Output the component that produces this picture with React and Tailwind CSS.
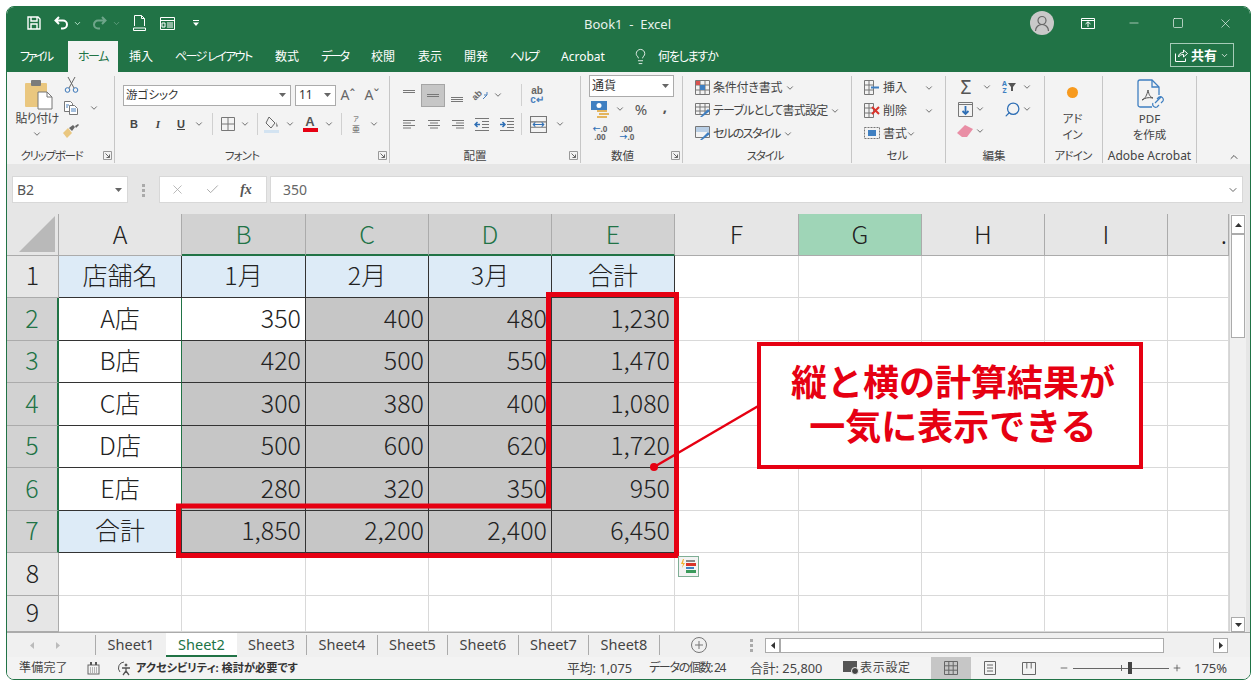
import React from "react";
import { ChevronDown, ChevronUp, X, Check, Minus, Square, Lightbulb, Plus, Search } from "lucide-react";

const Chev = ({ c = "#555", s = 10 }) => <ChevronDown size={s} color={c} strokeWidth={2} />;
const Caret = ({ c = "#666" }) => (
  <svg width="7" height="4" viewBox="0 0 7 4"><path d="M0 0h7L3.5 4z" fill={c} /></svg>
);
const Slot = ({ w, children }) => <div className={`flex items-center justify-center shrink-0 ${w}`}>{children}</div>;
const Dots = () => (
  <svg width="3" height="14" viewBox="0 0 3 14" fill="#aaa"><rect y="1" width="3" height="3" /><rect y="6" width="3" height="3" /><rect y="11" width="3" height="3" /></svg>
);

const Ic = ({ s = 16, vb = "0 0 16 16", stroke = "#666", children, sw = 1 }) => (
  <svg width={s} height={s} viewBox={vb} fill="none" stroke={stroke} strokeWidth={sw}>{children}</svg>
);
const Lines = ({ d, stroke = "#777" }) => <Ic stroke={stroke}><path d={d} /></Ic>;

const Launcher = () => (
  <svg className="absolute right-[2px] top-[2px]" width="9" height="9" viewBox="0 0 9 9" fill="none" stroke="#666">
    <path d="M.5 8.500V.5h8v8z" stroke="#999" /><path d="M2.500 2.500l4 4M6.500 3.500v3h-3" />
  </svg>
);

const Group = ({ w, label, launcher, children, labelClass = "" }) => (
  <div className={`flex flex-col shrink-0 h-[87px] border-r border-[#c6c6c6] ${w}`}>
    <div className="h-[73px]">{children}</div>
    <div className={`relative h-[14px] flex items-center justify-center text-[11.500px] leading-none text-[#444] whitespace-nowrap ${labelClass}`}>
      <span>{label}</span>
      {launcher && <Launcher />}
    </div>
  </div>
);

const T = ({ children, className = "" }) => <span className={`text-[12px] leading-none whitespace-nowrap text-[#444] ${className}`}>{children}</span>;

const tabs = [
  ["挿入", "w-[24px] ml-[11px]"],
  ["ページ レイアウト", "w-[78px] ml-[22px] tracking-[-1.600px]"],
  ["数式", "w-[24px] ml-[22px]"],
  ["データ", "w-[28px] ml-[22px] tracking-[-2.300px]"],
  ["校閲", "w-[24px] ml-[22px]"],
  ["表示", "w-[24px] ml-[23px]"],
  ["開発", "w-[24px] ml-[22px]"],
  ["ヘルプ", "w-[28px] ml-[22px] tracking-[-2.300px]"],
  ["Acrobat", "w-[45px] ml-[23px]"],
];

const TitleBar = () => (
  <div className="h-[32px] bg-[#217346] flex items-center text-white shrink-0">
    <Slot w="w-[16px] ml-[19px]">
      <Ic stroke="#fff" sw={1.400}><path d="M2 2h10l2 2v10H2zM5 2v4h6V2M5 14V9h6v5" /></Ic>
    </Slot>
    <Slot w="w-[18px] ml-[11px]">
      <svg width="16" height="14" viewBox="0 0 16 14" fill="none" stroke="#fff" strokeWidth="2"><path d="M5 1L1.500 4.500 5 8M2 4.500h7a4 4 0 014 4v0a4 4 0 01-4 4H7" /></svg>
    </Slot>
    <Slot w="w-[10px] ml-[1px]"><Chev c="#dfe" s={9} /></Slot>
    <Slot w="w-[18px] ml-[8px]">
      <svg width="16" height="14" viewBox="0 0 16 14" fill="none" stroke="#6ea58a" strokeWidth="2"><path d="M11 1l3.500 3.500L11 8M14 4.500H7a4 4 0 00-4 4v0a4 4 0 004 4h2" /></svg>
    </Slot>
    <Slot w="w-[10px] ml-[3px]"><Chev c="#6ea58a" s={9} /></Slot>
    <Slot w="w-[16px] ml-[10px]">
      <svg width="13" height="16" viewBox="0 0 13 16" fill="none" stroke="#fff"><path d="M1.500 11V.5h7l3 3V11M8.500.5v3h3M.5 13h12v2.500H.5z" /></svg>
    </Slot>
    <Slot w="w-[16px] ml-[12px]">
      <svg width="15" height="13" viewBox="0 0 15 13" fill="none" stroke="#fff"><path d="M.5.5h14v12H.5zM.5 3.500h14M2 6h3v4H2zM7 6h6M7 8h6M7 10h6" /></svg>
    </Slot>
    <Slot w="w-[10px] ml-[16px]">
      <svg width="6" height="6" viewBox="0 0 6 6" fill="#fff"><path d="M0 0h6v1H0zM0 2.500h6L3 6z" /></svg>
    </Slot>
    <div className="ml-[383px] mt-[2px] w-[88px] text-[13px] leading-none whitespace-nowrap text-[#e8f2ec]">Book1&nbsp; - &nbsp;Excel</div>
    <div className="ml-[358px] w-[24px] h-[24px] rounded-full bg-[#c9c9c9] flex items-center justify-center">
      <svg width="18" height="18" viewBox="0 0 18 18" fill="none" stroke="#666" strokeWidth="1.200"><circle cx="9" cy="6.500" r="4" /><path d="M2.500 17c0-4 3-6.500 6.500-6.500s6.500 2.500 6.500 6.500" /></svg>
    </div>
    <Slot w="w-[16px] ml-[26px]">
      <svg width="14" height="11" viewBox="0 0 14 11" fill="none" stroke="#fff"><path d="M.5.5h13v10H.5zM.5 2.500h13M7 9V4M4.500 6L7 3.800 9.500 6" /></svg>
    </Slot>
    <Slot w="w-[16px] ml-[30px]"><Minus size={14} color="#fff" strokeWidth={1} /></Slot>
    <Slot w="w-[16px] ml-[28px]"><Square size={12} color="#fff" strokeWidth={1.300} /></Slot>
    <Slot w="w-[16px] ml-[31px]"><X size={15} color="#fff" strokeWidth={1} /></Slot>
  </div>
);

const TabBar = () => (
  <div className="h-[33px] bg-[#217346] flex items-end shrink-0 relative">
    <div className="flex items-end h-full">
      <div className="flex items-center h-[31px] w-[32px] ml-[13px] text-[12px] text-white whitespace-nowrap tracking-[-2.500px]">ファイル</div>
      <div className="flex items-center justify-center h-[31px] w-[50px] ml-[16px] bg-[#f3f3f3] text-[12px] text-[#217346] whitespace-nowrap tracking-[-1.500px]">ホーム</div>
      {tabs.map(([t, c]) => (
        <div key={t} className={`flex items-center h-[31px] text-[12px] text-white whitespace-nowrap ${c}`}>{t}</div>
      ))}
      <div className="flex items-center h-[31px] ml-[26px]"><Lightbulb size={17} color="#fff" strokeWidth={1.200} /></div>
      <div className="flex items-center h-[31px] w-[58px] ml-[9px] text-[12px] text-white whitespace-nowrap tracking-[-1.200px]">何をしますか</div>
    </div>
    <div className="ml-[454px] mb-[5px] w-[64px] h-[24px] border border-[#a6ccb8] flex items-center justify-center gap-[3px] text-white">
      <svg width="13" height="13" viewBox="0 0 13 13" fill="none" stroke="#fff"><path d="M.5 4.500v8h10v-3M3.500 8c0-3 2-4.500 5-4.500V1l4 3.500-4 3.500V5.500C6 5.500 4.500 6.500 3.500 8z" /></svg>
      <span className="text-[13px] font-bold leading-none">共有</span>
      <Chev c="#fff" s={9} />
    </div>
  </div>
);

const Ribbon = () => (
  <div className="h-[92px] bg-[#f3f3f3] pt-[4px] flex shrink-0">
    <Group w="w-[108px]" label={<span className="tracking-[-1.300px]">クリップボード</span>} launcher labelClass="pr-[18px]">
      <div className="flex">
        <div className="ml-[6px] w-[48px] flex flex-col items-center">
          <svg className="mt-[4px] ml-[4px]" width="28" height="30" viewBox="0 0 28 30">
            <rect x="0" y="3" width="22" height="24" rx="1" fill="#eac77f" />
            <rect x="6" y="0" width="10" height="6" rx="1" fill="#7b7b7b" />
            <path d="M13 12h9l5 5v12H13z" fill="#fff" stroke="#777" />
            <path d="M22 12v5h5" fill="none" stroke="#777" />
          </svg>
          <T className="mt-[3px] text-[11.500px] tracking-[-0.700px]">貼り付け</T>
          <div className="mt-[4px]"><Chev /></div>
        </div>
        <div className="w-[20px] flex flex-col items-center">
          <div className="h-[18px] flex items-center">
            <svg width="15" height="16" viewBox="0 0 15 16" fill="none" stroke="#666"><circle cx="3.500" cy="13" r="2.300" stroke="#3a76b8" /><circle cx="11.500" cy="13" r="2.300" stroke="#3a76b8" /><path d="M5 11L11 0M10 11L4 0" /></svg>
          </div>
          <div className="h-[27px] flex items-center">
            <svg width="16" height="16" viewBox="0 0 16 16" fill="#fff" stroke="#777"><path d="M1.500 1.500h6l2 2v8h-8z" /><path d="M6.500 5.500h5l3 3v6h-8z" /><path d="M8 9h5M8 11h5M3 5h3M3 7h2" stroke="#4a80bd" /></svg>
          </div>
          <div className="h-[20px] flex items-center">
            <svg width="16" height="14" viewBox="0 0 16 14"><path d="M0 9l5-5 4 5-5 5z" fill="#eac77f" /><path d="M6 4l4-3 2 2-3 4z" fill="#666" /><path d="M12 2l3-2 1 1-3 3z" fill="#666" /></svg>
          </div>
        </div>
        <div className="w-[26px] flex items-start justify-center pt-[27px]"><Chev /></div>
      </div>
    </Group>

    <Group w="w-[275px]" label={<span className="tracking-[-0.800px]">フォント</span>} launcher labelClass="pr-[20px]">
      <div className="flex flex-col pt-[8px] gap-[7px] pl-[8px]">
        <div className="flex items-center h-[22px]">
          <div className="w-[168px] h-[21px] bg-white border border-[#ababab] flex items-center justify-between pl-[2px] pr-[4px]">
            <span className="text-[11.500px] leading-none text-[#333]">游ゴシック</span><Caret />
          </div>
          <div className="ml-[4px] w-[41px] h-[21px] bg-white border border-[#ababab] flex items-center justify-between pl-[3px] pr-[4px]">
            <span className="text-[12px] leading-none text-[#333]">11</span><Caret />
          </div>
          <Slot w="w-[24px] ml-[0px]"><span className="text-[14px] text-[#666] leading-none">Aˆ</span></Slot>
          <Slot w="w-[24px]"><span className="text-[14px] text-[#666] leading-none">Aˇ</span></Slot>
        </div>
        <div className="flex items-center h-[22px]">
          <Slot w="w-[22px]"><span className="text-[11px] font-bold text-[#444] leading-none font-['Liberation_Sans',sans-serif]">B</span></Slot>
          <Slot w="w-[26px]"><span className="text-[11px] font-bold italic text-[#444] leading-none font-['Liberation_Serif',serif]">I</span></Slot>
          <Slot w="w-[20px]"><span className="text-[11px] font-bold underline text-[#444] leading-none font-['Liberation_Sans',sans-serif]">U</span></Slot>
          <Slot w="w-[16px]"><Chev /></Slot>
          <Slot w="w-[10px]"><div className="w-px h-[22px] bg-[#d0d0d0]" /></Slot>
          <Slot w="w-[22px]"><svg width="14" height="14" viewBox="0 0 14 14" fill="none" stroke="#777"><path d="M.5.5h13v13H.5zM7 .5v13M.5 7h13" /></svg></Slot>
          <Slot w="w-[12px]"><Chev /></Slot>
          <Slot w="w-[12px]"><div className="w-px h-[22px] bg-[#d0d0d0]" /></Slot>
          <Slot w="w-[18px]"><svg width="16" height="17" viewBox="0 0 16 17" fill="none"><path d="M5 1l6 6-4 5-5-5z" stroke="#666" /><path d="M12 6c1 2 2 3 2 4s-2 1-2 0 0-3 0-4z" fill="#999" /><rect x="0" y="14" width="15" height="3" fill="#d3e3f1" /></svg></Slot>
          <Slot w="w-[18px]"><Chev /></Slot>
          <Slot w="w-[22px]">
            <div className="flex flex-col items-center">
              <span className="text-[13px] font-bold text-[#555] leading-[12px] font-['Liberation_Sans',sans-serif]">A</span>
              <div className="w-[15px] h-[4px] bg-[#e60012]" />
            </div>
          </Slot>
          <Slot w="w-[16px]"><Chev /></Slot>
          <Slot w="w-[8px]"><div className="w-px h-[22px] bg-[#d0d0d0]" /></Slot>
          <Slot w="w-[22px]">
            <div className="flex flex-col items-center gap-[1px]">
              <span className="text-[6px] h-[7px] leading-[7px] text-[#555] block overflow-hidden">ア</span>
              <span className="text-[8px] h-[9px] leading-[9px] text-[#555] block overflow-hidden">亜</span>
            </div>
          </Slot>
          <Slot w="w-[14px]"><Chev /></Slot>
        </div>
      </div>
    </Group>

    <Group w="w-[191px]" label="配置" launcher labelClass="pr-[20px]">
      <div className="flex flex-col pt-[8px] gap-[7px] pl-[7px]">
        <div className="flex items-center h-[22px]">
          <Slot w="w-[24px]"><Lines d="M2 3.500h12M2 5.500h12" /></Slot>
          <Slot w="w-[24px] h-[23px] bg-[#c6c6c6] border border-[#a5a5a5]"><Lines d="M2 7.500h12M2 9.500h12" /></Slot>
          <Slot w="w-[24px]"><Lines d="M2 10.500h12M2 12.500h12M2 14.500h12" /></Slot>
          <Slot w="w-[22px]">
            <div className="flex items-center">
              <span className="text-[9px] font-bold leading-none text-[#666] -rotate-45 font-['Liberation_Sans',sans-serif]">ab</span>
              <svg className="-ml-[1px]" width="6" height="10" viewBox="0 0 6 10" fill="none" stroke="#4a80bd"><path d="M1 9l4-4M5 5V2M5 5H2" /></svg>
            </div>
          </Slot>
          <Slot w="w-[14px]"><Chev /></Slot>
          <Slot w="w-[16px] ml-[8px]"><div className="w-px h-[22px] bg-[#d0d0d0]" /></Slot>
          <Slot w="w-[16px]">
            <div className="flex flex-col items-center">
              <span className="text-[10px] font-bold h-[9px] leading-[9px] text-[#666] block font-['Liberation_Sans',sans-serif]">ab</span>
              <span className="text-[10px] font-bold h-[9px] leading-[9px] text-[#4a80bd] block font-['Liberation_Sans',sans-serif]">c↵</span>
            </div>
          </Slot>
        </div>
        <div className="flex items-center h-[22px]">
          <Slot w="w-[24px]"><Lines d="M2 4.500h12M2 7h8M2 9.500h12M2 12h8" /></Slot>
          <Slot w="w-[25px]"><Lines d="M2 4.500h12M4 7h8M2 9.500h12M4 12h8" /></Slot>
          <Slot w="w-[24px]"><Lines d="M2 4.500h12M6 7h8M2 9.500h12M6 12h8" /></Slot>
          <Slot w="w-[24px]"><svg width="16" height="16" viewBox="0 0 16 16" fill="none"><path d="M1 2.500h14M1 14.500h14M8 5.500h7M8 8.500h7M8 11.500h7" stroke="#777" /><path d="M1 8.500h5M3.500 6L1 8.500 3.500 11" stroke="#2f6fb5" strokeWidth="1.500" /></svg></Slot>
          <Slot w="w-[25px]"><svg width="16" height="16" viewBox="0 0 16 16" fill="none"><path d="M1 2.500h14M1 14.500h14M8 5.500h7M8 8.500h7M8 11.500h7" stroke="#777" /><path d="M1 8.500h5M3.500 6L6 8.500 3.500 11" stroke="#2f6fb5" strokeWidth="1.500" /></svg></Slot>
          <Slot w="w-[4px]"><div className="w-px h-[22px] bg-[#d0d0d0]" /></Slot>
          <Slot w="w-[30px]"><svg width="17" height="17" viewBox="0 0 16 16" fill="none" stroke="#777"><path d="M.5.5h15v15H.5zM.5 5.500h15M.5 10.500h15" /><path d="M3 8h10M5 6l-2 2 2 2M11 6l2 2-2 2" stroke="#2f6fb5" /></svg></Slot>
          <Slot w="w-[14px]"><Chev /></Slot>
        </div>
      </div>
    </Group>

    <Group w="w-[102px]" label="数値" launcher labelClass="pr-[18px]">
      <div className="pl-[8px]">
        <div className="w-[85px] h-[22px] bg-white border border-[#ababab] flex items-center justify-between pl-[2px] pr-[4px] -mt-[1px]">
          <span className="text-[12px] leading-none text-[#333]">通貨</span><Caret />
        </div>
        <div className="flex items-center h-[24px]">
          <Slot w="w-[22px]"><svg width="18" height="17" viewBox="0 0 18 17"><rect x="0" y="0" width="16" height="9" fill="#3f7fc1" /><circle cx="8" cy="4.500" r="2.500" fill="#fff" /><rect x="6" y="9" width="10" height="2" fill="#e4b55e" /><rect x="8" y="12" width="10" height="2" fill="#e4b55e" /><rect x="6" y="15" width="10" height="2" fill="#e4b55e" /></svg></Slot>
          <Slot w="w-[17px]"><Chev /></Slot>
          <Slot w="w-[26px]"><span className="text-[15px] leading-none text-[#555]">%</span></Slot>
          <Slot w="w-[22px]"><span className="text-[15px] font-bold leading-none text-[#555] -mt-[5px]">,</span></Slot>
        </div>
        <div className="flex items-center h-[24px]">
          <Slot w="w-[22px]">
            <div className="flex flex-col items-center">
              <span className="text-[8px] font-bold h-[8px] leading-[8px] text-[#666] block"><span className="text-[#2f6fb5]">←</span>.0</span>
              <span className="text-[8px] font-bold h-[8px] leading-[8px] text-[#666] block">.00</span>
            </div>
          </Slot>
          <Slot w="w-[32px]">
            <div className="flex flex-col items-center">
              <span className="text-[8px] font-bold h-[8px] leading-[8px] text-[#666] block">.00</span>
              <span className="text-[8px] font-bold h-[8px] leading-[8px] text-[#666] block"><span className="text-[#2f6fb5]">→</span>.0</span>
            </div>
          </Slot>
        </div>
      </div>
    </Group>

    <Group w="w-[169px]" label={<span className="tracking-[-1.200px]">スタイル</span>} labelClass="pr-[4px]">
      <div className="pl-[11px] flex flex-col">
        {[
          ["条件付き書式", "tracking-[-0.200px]", <svg key="a" width="15" height="15" viewBox="0 0 15 15" fill="none" stroke="#777"><path d="M.5.5h14v14H.5zM.5 5h14M.5 10h14M5 .5v14M10 .5v14" /><rect x="1" y="1" width="4" height="4" fill="#d9534f" stroke="none" /><rect x="5" y="5" width="5" height="5" fill="#3f7fc1" stroke="none" /></svg>],
          ["テーブルとして書式設定", "tracking-[-0.800px]", <svg key="b" width="16" height="15" viewBox="0 0 16 15" fill="none" stroke="#777"><path d="M.5.500h14v11H.5zM.5 4h14M.5 8h14M5 .5v11M10 .5v11" /><path d="M5 14l8-8 2 2-8 6z" fill="#3f7fc1" stroke="none" /></svg>],
          ["セルのスタイル", "tracking-[-1.500px]", <svg key="c" width="16" height="15" viewBox="0 0 16 15" fill="none" stroke="#777"><path d="M.5.500h14v11H.5z" /><rect x="1" y="1" width="13" height="5" fill="#b9cfe6" stroke="none" /><path d="M5 14l8-8 2 2-8 6z" fill="#3f7fc1" stroke="none" /></svg>],
        ].map(([t, tr, i]) => (
          <div key={t} className="flex items-center h-[23px]">
            <Slot w="w-[17px]">{i}</Slot>
            <span className={`ml-[2px] text-[12px] leading-none whitespace-nowrap text-[#444] ${tr}`}>{t}</span>
            <span className="ml-[3px]"><Chev /></span>
          </div>
        ))}
      </div>
    </Group>

    <Group w="w-[94px]" label="セル" labelClass="pr-[2px]">
      <div className="pl-[11px] flex flex-col">
        {[
          ["挿入", "w-[18px]", <svg key="a" width="16" height="15" viewBox="0 0 16 15" fill="none" stroke="#777"><path d="M.5.500h9v14h-9zM.5 5h9M.5 10h9M5 .5v14" /><path d="M7 7.500h8" stroke="#3f7fc1" strokeWidth="2" /></svg>],
          ["削除", "w-[18px]", <svg key="b" width="16" height="15" viewBox="0 0 16 15" fill="none" stroke="#777"><path d="M.5.500h9v14h-9zM.5 5h9M.5 10h9M5 .5v14" /><path d="M8 4l7 7M15 4l-7 7" stroke="#d9342b" strokeWidth="2" /></svg>],
          ["書式", "w-[0px]", <svg key="c" width="16" height="15" viewBox="0 0 16 15" fill="none" stroke="#777"><path d="M.5 1.500h15v11H.5z" strokeDasharray="2 1" /><rect x="4" y="4" width="8" height="6" fill="#3f7fc1" stroke="none" /></svg>],
        ].map(([t, g, i]) => (
          <div key={t} className="flex items-center h-[23px]">
            <Slot w="w-[17px]">{i}</Slot>
            <span className="ml-[3px] text-[12px] leading-none whitespace-nowrap text-[#444]">{t}</span>
            <span className={g} />
            <span className="-ml-[1px]"><Chev /></span>
          </div>
        ))}
      </div>
    </Group>

    <Group w="w-[99px]" label="編集" labelClass="pr-[2px]">
      <div className="flex flex-col pl-[9px]">
        <div className="flex items-center h-[22px]">
          <Slot w="w-[22px]"><span className="text-[19px] leading-none text-[#555]">Σ</span></Slot>
          <Slot w="w-[20px]"><Chev /></Slot>
          <Slot w="w-[24px]">
            <div className="flex flex-col items-center mr-[1px]">
              <span className="text-[7px] font-bold h-[7px] leading-[7px] text-[#3f7fc1] block">A</span>
              <span className="text-[7px] font-bold h-[7px] leading-[7px] text-[#3f7fc1] block">Z</span>
            </div>
            <svg width="8" height="8" viewBox="0 0 8 8" fill="#555"><path d="M0 0h8L5 4v4H3V4z" /></svg>
          </Slot>
          <Slot w="w-[12px]"><Chev /></Slot>
        </div>
        <div className="flex items-center h-[22px]">
          <Slot w="w-[20px]"><svg width="15" height="15" viewBox="0 0 15 15" fill="none" stroke="#777"><path d="M.5.5h14v14H.5zM.5 2.500h14" /><path d="M7.500 4v8M4.500 9l3 3 3-3" stroke="#2f6fb5" strokeWidth="1.800" /></svg></Slot>
          <Slot w="w-[10px]"><Chev /></Slot>
          <Slot w="w-[18px] ml-[18px]"><Search size={17} color="#2f6fb5" strokeWidth={1.800} className="-scale-x-100" /></Slot>
          <Slot w="w-[12px]"><Chev /></Slot>
        </div>
        <div className="flex items-center h-[22px]">
          <Slot w="w-[20px]"><svg width="16" height="13" viewBox="0 0 16 13"><path d="M0 8l8-8 8 4-6 8H5z" fill="#e98ea5" /></svg></Slot>
          <Slot w="w-[10px]"><Chev /></Slot>
        </div>
      </div>
    </Group>

    <Group w="w-[58px]" label={<span className="tracking-[-0.800px]">アドイン</span>} labelClass="pr-[1px]">
      <div className="flex flex-col items-center pr-[2px]">
        <div className="mt-[11px] w-[11px] h-[11px] rounded-full bg-[#f79a1e]" />
        <div className="mt-[13px] text-[11.500px] leading-[16px] text-center text-[#444]">アド<br />イン</div>
      </div>
    </Group>

    <Group w="w-[94px]" label="Adobe Acrobat" labelClass="text-[12px]">
      <div className="flex flex-col items-center">
        <svg className="mt-[3px]" width="28" height="32" viewBox="0 0 28 32" fill="none" stroke="#3f7fc1" strokeWidth="1.300">
          <path d="M16 28H4a2 2 0 01-2-2V3a2 2 0 012-2h12l7 7v8" /><path d="M16 1v7h7" />
          <path d="M6 21c3-1 5-5 6-10 1 5 2 7 5 8-5-1-8 0-11 2z" stroke="#555" strokeWidth="1" />
          <path d="M19 24l6-6M17 24a3 3 0 004 4l2-2M21 20l2-2a3 3 0 014 4l-2 2" strokeWidth="1.200" />
        </svg>
        <div className="text-[11.500px] leading-[16px] text-center text-[#444]">PDF<br />を作成</div>
      </div>
    </Group>

    <div className="flex-1 flex items-end justify-end pr-[10px] pb-[1px]"><ChevronUp size={12} color="#555" /></div>
  </div>
);

const FormulaBar = () => (
  <div className="h-[50px] bg-[#e6e6e6] shrink-0 pl-[5px] pr-[7px] pt-[12px]">
    <div className="flex h-[27px] items-stretch">
      <div className="w-[116px] bg-white border border-[#d8d8d8] flex items-center justify-between pl-[4px] pr-[5px]">
        <span className="text-[14px] leading-none text-[#555]">B2</span><Caret />
      </div>
      <Slot w="w-[31px]"><Dots /></Slot>
      <div className="w-[108px] bg-white border border-[#d8d8d8] flex items-center">
        <Slot w="w-[34px]"><X size={15} color="#aaa" strokeWidth={1.300} /></Slot>
        <Slot w="w-[36px]"><Check size={15} color="#aaa" strokeWidth={1.600} /></Slot>
        <Slot w="w-[32px]"><span className="text-[14px] font-bold italic text-[#555] leading-none font-['Liberation_Serif',serif]">fx</span></Slot>
      </div>
      <div className="ml-[3px] flex-1 bg-white border border-[#d8d8d8] flex items-center justify-between pl-[12px] pr-[3px]">
        <span className="text-[14px] leading-none text-[#666]">350</span><Chev c="#666" s={12} />
      </div>
    </div>
  </div>
);

const cols = ["A", "B", "C", "D", "E", "F", "G", "H", "I", "."];
const data = [
  ["店舗名", "1月", "2月", "3月", "合計"],
  ["A店", "350", "400", "480", "1,230"],
  ["B店", "420", "500", "550", "1,470"],
  ["C店", "300", "380", "400", "1,080"],
  ["D店", "500", "600", "620", "1,720"],
  ["E店", "280", "320", "350", "950"],
  ["合計", "1,850", "2,200", "2,400", "6,450"],
  [],
  [],
];

const colHeadClass = (i) => {
  if (i >= 1 && i <= 4) return "justify-center bg-[#d2d2d2] text-[#217346] border-b-2 border-b-[#217346]";
  if (i === 6) return "justify-center bg-[#9fd5b7] text-[#222] border-b border-b-[#ababab]";
  if (i === 9) return "justify-end pr-[1px] bg-[#e6e6e6] text-[#222] border-b border-b-[#ababab]";
  return "justify-center bg-[#e6e6e6] text-[#222] border-b border-b-[#ababab]";
};

const cellClass = (r, c) => {
  if (c > 4 || r > 6) return "border-r border-b border-[#d9d9d9] bg-white";
  let b = "border-r border-b border-r-[#333] border-b-[#333] text-[#222] ";
  if (r === 0) return b + "bg-[#ddebf7] justify-center";
  if (c === 0) return (r === 6 ? "border-r border-b border-r-[#333] border-b-[#333] text-[#222] bg-[#ddebf7]" : "border-r border-b border-r-[#217346] border-b-[#333] text-[#222] bg-white") + " justify-center";
  if (r === 1 && c === 1) return b + "bg-white justify-end pr-[4px]";
  return b + "bg-[#c6c6c6] justify-end pr-[4px]";
};

const Sheet = () => (
  <div className="relative flex h-[418px] shrink-0 bg-white">
    <div className="w-[1222px] shrink-0 grid grid-cols-[52px_123px_124px_123px_123px_123px_124px_123px_123px_123px_61px] grid-rows-[42px_42px_43px_42px_43px_42px_43px_42px_43px_36px] font-['Noto_Sans_CJK_JP','Liberation_Sans',sans-serif] [font-feature-settings:normal] text-[25px] leading-none">
      <div className="bg-[#e6e6e6] border-r border-b border-[#ababab] flex items-end justify-end pr-[3px] pb-[3px]">
        <svg width="36" height="36" viewBox="0 0 36 36"><path d="M36 0v36H0z" fill="#b9b9b9" /></svg>
      </div>
      {cols.map((c, i) => (
        <div key={i} className={`flex items-center pb-[2px] border-r border-r-[#ababab] font-light ${colHeadClass(i)}`}>{c}</div>
      ))}
      {data.map((row, r) => (
        <React.Fragment key={r}>
          <div className={`flex items-center justify-center pb-[4px] font-light ${r >= 1 && r <= 6 ? "bg-[#d2d2d2] text-[#217346] border-r-2 border-r-[#217346] border-b border-b-[#ababab]" : "bg-[#e6e6e6] text-[#222] border-r border-r-[#ababab] border-b border-b-[#ababab]"}`}>{r + 1}</div>
          {cols.map((_, c) => (
            <div key={c} className={`flex items-center pb-[4px] font-light ${cellClass(r, c)}`}>{row[c] || ""}</div>
          ))}
        </React.Fragment>
      ))}
    </div>

    <div className="w-[17px] shrink-0 bg-[#f0f0f0] border-l border-[#d4d4d4] flex flex-col">
      <div className="h-[19px] mt-[1px] mx-[1px] bg-white border border-[#ababab] flex items-center justify-center"><svg width="7" height="4" viewBox="0 0 7 4"><path d="M0 4h7L3.500 0z" fill="#333" /></svg></div>
      <div className="h-[104px] mx-[1px] bg-white border border-[#ababab]" />
      <div className="flex-1" />
      <div className="h-[15px] mx-[1px] bg-white border border-[#ababab] flex items-center justify-center"><Caret c="#333" /></div>
    </div>
    <div className="flex-1 bg-[#e6e6e6]" />

    <svg className="absolute inset-0 pointer-events-none" width="1243" height="418" viewBox="7 214 1243 418" fill="none">
      <path d="M548.500 294.500H676.500V555.500H178.500V506H548.500Z" stroke="#e60012" strokeWidth="5" />
      <path d="M760 405L654 467" stroke="#e60012" strokeWidth="2.500" />
      <circle cx="654" cy="467" r="4" fill="#e60012" />
    </svg>

    <div className="absolute left-[750px] top-[128px] w-[386px] h-[127px] bg-white border-[4px] border-[#e60012] flex items-center justify-center pb-[7px] pl-[6px] text-center font-bold text-[36px] leading-[44px] text-[#e60012] font-['Noto_Sans_CJK_JP',sans-serif] [font-feature-settings:normal]">
      <div>縦と横の計算結果が<br />一気に表示できる</div>
    </div>

    <div className="absolute left-[671px] top-[342px] w-[21px] h-[21px] bg-[#f3f3f3] border border-[#7fae95] flex items-center justify-center">
      <svg width="16" height="15" viewBox="0 0 16 15"><path d="M2 0L0 5h2L1 9l3-5H2l1-4z" fill="#f2b233" /><rect x="5" y="1" width="9" height="2" fill="#888" /><rect x="5" y="4" width="10" height="3" fill="#d9342b" /><rect x="5" y="8" width="8" height="2" fill="#3f7fc1" /><rect x="5" y="11" width="10" height="3" fill="#3a9a5b" /></svg>
    </div>
  </div>
);

const sheetTabs = ["Sheet1", "Sheet2", "Sheet3", "Sheet4", "Sheet5", "Sheet6", "Sheet7", "Sheet8"];

const TabsBar = () => (
  <div className="h-[25px] bg-[#f0f0f0] border-t border-[#ababab] flex items-stretch shrink-0">
    <div className="w-[89px] flex items-center border-r border-[#ababab] my-[2px]">
      <Slot w="w-[12px] ml-[19px]"><svg width="4" height="7" viewBox="0 0 4 7"><path d="M4 0v7L0 3.500z" fill="#bbb" /></svg></Slot>
      <Slot w="w-[12px] ml-[14px]"><svg width="4" height="7" viewBox="0 0 4 7"><path d="M0 0v7l4-3.500z" fill="#bbb" /></svg></Slot>
    </div>
    {sheetTabs.map((s, i) =>
      i === 1 ? (
        <div key={s} className="w-[71px] bg-white border-b-2 border-[#217346] flex items-center justify-center text-[14.500px] leading-none text-[#217346]">{s}</div>
      ) : (
        <div key={s} className={`flex items-center justify-center my-[2px] pb-[2px] text-[14.500px] leading-none text-[#444] ${i % 2 === 0 ? "w-[70px]" : "w-[71px]"} ${i === 0 ? "" : "border-r border-[#ababab]"}`}>{s}</div>
      )
    )}
    <div className="w-[78px] flex items-center justify-center">
      <svg width="16" height="16" viewBox="0 0 16 16" fill="none" stroke="#777"><circle cx="8" cy="8" r="7.500" /><path d="M8 4v8M4 8h8" /></svg>
    </div>
    <Slot w="w-[26px]"><Dots /></Slot>
    <div className="flex items-center">
      <div className="ml-[1px] w-[15px] h-[15px] bg-white border border-[#ababab] flex items-center justify-center"><svg width="4" height="7" viewBox="0 0 4 7"><path d="M4 0v7L0 3.500z" fill="#333" /></svg></div>
      <div className="w-[384px] h-[15px] bg-white border border-[#ababab]" />
      <div className="ml-[49px] w-[15px] h-[15px] bg-white border border-[#ababab] flex items-center justify-center"><svg width="4" height="7" viewBox="0 0 4 7"><path d="M0 0v7l4-3.500z" fill="#333" /></svg></div>
    </div>
  </div>
);

const StatusBar = () => (
  <div className="flex-1 bg-[#f3f3f3] flex items-center text-[12px] leading-none text-[#444] whitespace-nowrap">
    <span className="ml-[12px] w-[48px] tracking-[0.200px]">準備完了</span>
    <Slot w="w-[16px] ml-[18px]"><svg width="13" height="13" viewBox="0 0 13 13"><rect x="1" y="3" width="11" height="9" fill="none" stroke="#666" /><path d="M3 0h2v3H3zM8 0h2v3H8z" fill="#555" /><path d="M3 6h7M3 8h7M3 10h7" stroke="#777" strokeDasharray="1 1" /></svg></Slot>
    <Slot w="w-[18px] ml-[14px]"><svg width="16" height="16" viewBox="0 0 16 16" fill="none" stroke="#555"><path d="M8 2a6 6 0 00-4 10" /><circle cx="10" cy="5" r="1" fill="#555" /><path d="M6 8h8M10 8v3l-3 4M10 11l3 4" strokeWidth="1.300" /></svg></Slot>
    <span className="ml-[3px] w-[163px] font-bold text-[11.200px] text-[#333]">アクセシビリティ: 検討が必要です</span>
    <span className="ml-[268px] w-[66px] text-[12.800px]">平均: 1,075</span>
    <span className="ml-[16px] w-[75px] tracking-[-1.300px]">データの個数: 24</span>
    <span className="ml-[26px] w-[74px] text-[12.800px]">合計: 25,800</span>
    <Slot w="w-[16px] ml-[19px]"><svg width="16" height="14" viewBox="0 0 16 14"><rect x="0" y="0" width="14" height="11" fill="#555" /><circle cx="12" cy="10" r="3.500" fill="#444" stroke="#f3f3f3" /></svg></Slot>
    <span className="ml-[1px] w-[51px] tracking-[0.700px]">表示設定</span>
    <div className="ml-[20px] w-[40px] h-full bg-[#c6c6c6] flex items-center justify-center">
      <svg width="14" height="14" viewBox="0 0 14 14" fill="none" stroke="#666"><path d="M.5.5h13v13H.5zM4.800.5v13M9.200.5v13M.5 4.800h13M.5 9.200h13" /></svg>
    </div>
    <Slot w="w-[38px]"><svg width="12" height="14" viewBox="0 0 12 14" fill="none" stroke="#666"><path d="M.5.5h11v13H.5zM3 4h6M3 7h6M3 10h6" /></svg></Slot>
    <Slot w="w-[40px]"><svg width="14" height="13" viewBox="0 0 14 13" fill="none" stroke="#666"><path d="M.5.5h13v12H.5zM4.800.5v6M9.200.5v6" /></svg></Slot>
    <Slot w="w-[10px] ml-[10px]"><Minus size={10} color="#555" /></Slot>
    <div className="ml-[4px] w-[96px] h-[12px] flex items-center">
      <div className="w-[48px] h-px bg-[#666]" />
      <div className="w-px h-[6px] bg-[#666]" />
      <div className="w-[6px] h-px bg-[#666]" />
      <div className="w-[4px] h-[12px] bg-[#444]" />
      <div className="flex-1 h-px bg-[#666]" />
    </div>
    <Slot w="w-[10px] ml-[3px]"><Plus size={10} color="#555" /></Slot>
    <span className="ml-[12px] text-[13px]">175%</span>
  </div>
);

export default function App() {
  return (
    <div className="w-[1255px] h-[687px] bg-white pt-[6px] pl-[6px] overflow-hidden font-['Noto_Sans','Noto_Sans_CJK_JP',sans-serif] [font-feature-settings:'palt']">
      <div className="w-[1245px] h-[674px] rounded-[8px] overflow-hidden border border-[#217346] flex flex-col">
        <TitleBar />
        <TabBar />
        <Ribbon />
        <FormulaBar />
        <Sheet />
        <TabsBar />
        <StatusBar />
      </div>
    </div>
  );
}
